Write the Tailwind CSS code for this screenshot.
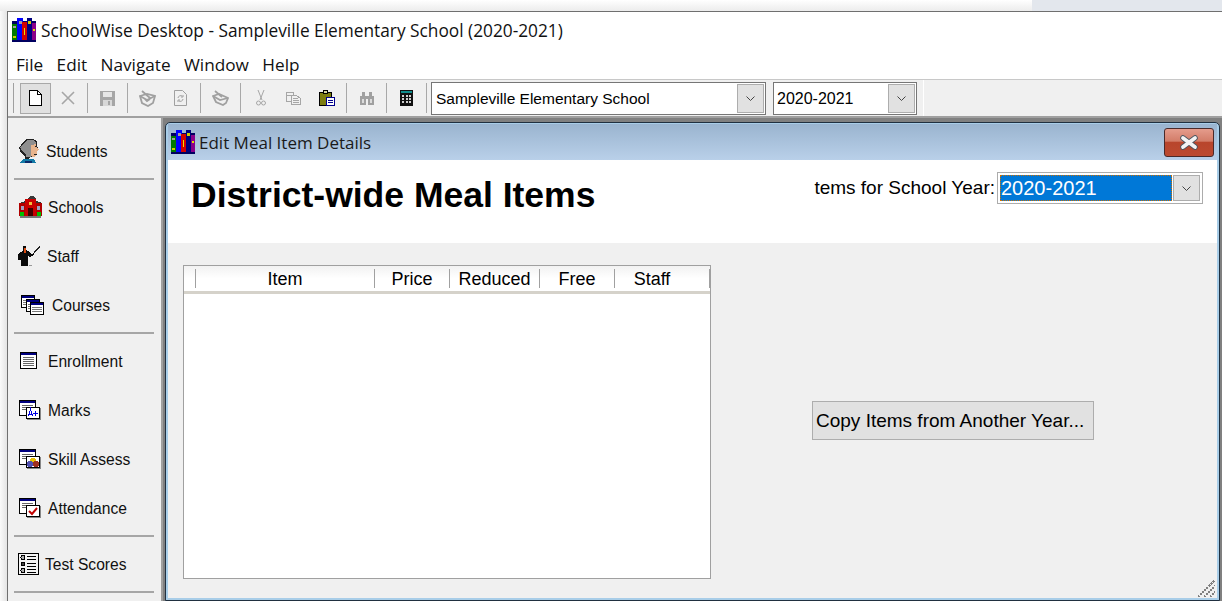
<!DOCTYPE html>
<html lang="en">
<head>
  <meta charset="UTF-8" />
  <title>SchoolWise Desktop</title>
  <script src="https://cdn.jsdelivr.net/npm/@tailwindcss/browser@4"></script>
</head>
<body class="w-[1222px] h-[601px] overflow-hidden flex flex-col bg-white text-black font-['Liberation_Sans',sans-serif]">

  <!-- area above the window -->
  <div class="h-[11px] shrink-0 flex bg-gradient-to-b from-[#ffffff] to-[#ececec]">
    <div class="flex-1"></div>
    <div class="w-[190px] bg-[#e3e7ed]"></div>
  </div>

  <div class="flex-1 flex min-h-0">
    <div class="w-[7px] shrink-0 bg-gradient-to-r from-[#fafafa] to-[#e4e4e4]"></div>

    <!-- main window -->
    <div class="flex-1 flex flex-col min-w-0 border-l border-t border-[#6f6f6f]">
      <div class="h-[36px] shrink-0 flex items-center pl-[4px] gap-[5px] text-[17.3px] text-[#111] font-['Open_Sans',sans-serif]">
        <svg width="24" height="24" viewBox="0 0 24 24" shape-rendering="crispEdges">
          <rect x="0" y="3" width="24" height="21" fill="#000060"/>
          <rect x="0" y="6" width="5" height="16" fill="#007a00"/>
          <rect x="5" y="0" width="6" height="22" fill="#0000ff"/>
          <rect x="10" y="4" width="5" height="18" fill="#d40000"/>
          <rect x="15" y="0" width="5" height="22" fill="#00007f"/>
          <rect x="20" y="5" width="4" height="17" fill="#8a008a"/>
          <rect x="1" y="8" width="3" height="2" fill="#a0a0a0"/>
          <rect x="7" y="3" width="3" height="3" fill="#a0a0a0"/>
          <rect x="12" y="10" width="1" height="7" fill="#f0e000"/>
          <rect x="16" y="3" width="3" height="3" fill="#d0d000"/>
          <rect x="1" y="18" width="3" height="2" fill="#d0d000"/>
          <rect x="21" y="11" width="2" height="2" fill="#e0e000"/>
        </svg>
        <span class="pt-[2px]">SchoolWise Desktop - Sampleville Elementary School (2020-2021)</span>
      </div>
      <div class="h-[31px] shrink-0 flex items-center pl-[8px] pt-[2px] gap-[13.4px] text-[17.2px] text-[#111] font-['Open_Sans',sans-serif]">
        <span>File</span><span>Edit</span><span>Navigate</span><span>Window</span><span>Help</span>
      </div>

      <!-- toolbar -->
      <div class="h-[39px] shrink-0 flex bg-[#f0f0f0] border-t border-[#c8c8c8] border-b-2 border-b-[#a0a0a0]">
        <div class="w-[916px] shrink-0 flex items-center pl-[5px] border-r border-white">
          <div class="w-[2px] h-[30px] mr-[5px] border-l border-[#a0a0a0]"></div>
          <div class="w-[31px] h-[31px] flex items-center justify-center bg-[#e0e0e0] border border-[#a8a8a8]">
            <svg width="13" height="16" viewBox="0 0 13 16" shape-rendering="crispEdges"><path d="M.5.5h8l4 4v11H.5z" fill="#fff" stroke="#000"/><path d="M8.5.5v4h4" fill="none" stroke="#000"/></svg>
          </div>
          <div class="w-[33px] flex justify-center">
            <svg width="14" height="14" viewBox="0 0 14 14"><path d="M1 1l12 12M13 1L1 13" stroke="#a6a6a6" stroke-width="1.6"/></svg>
          </div>
          <div class="w-[7px] h-[30px] flex justify-center"><div class="w-px bg-[#a8a8a8]"></div></div>
          <div class="w-[33px] flex justify-center">
            <svg width="15" height="15" viewBox="0 0 15 15" shape-rendering="crispEdges"><path d="M0 0h14l1 1v14H0z" fill="#a6a6a6"/><rect x="3" y="1" width="9" height="5" fill="#e6e6e6"/><rect x="3" y="9" width="9" height="6" fill="#d8d8d8"/><rect x="8" y="10" width="2" height="4" fill="#a6a6a6"/></svg>
          </div>
          <div class="w-[7px] h-[30px] flex justify-center"><div class="w-px bg-[#a8a8a8]"></div></div>
          <div class="w-[33px] flex justify-center">
            <svg width="17" height="17" viewBox="0 0 17 17" fill="none" stroke="#a0a0a0" stroke-width="1.8"><path d="M1 6l7-2 8 2-2 7-5 3-6-3z"/><path d="M3 1l8 7M1 6l7 4 8-4M6 9l2 2 3-2"/></svg>
          </div>
          <div class="w-[33px] flex justify-center">
            <svg width="13" height="16" viewBox="0 0 13 16" fill="none" stroke="#a0a0a0"><path d="M.5.5h8l4 4v11H.5z"/><path d="M4 8c0-2 3-3 4-2M9 5v2H7M9 9c0 2-3 3-4 2M4 12v-2h2"/></svg>
          </div>
          <div class="w-[7px] h-[30px] flex justify-center"><div class="w-px bg-[#a8a8a8]"></div></div>
          <div class="w-[33px] flex justify-center">
            <svg width="17" height="16" viewBox="0 0 17 16" fill="none" stroke="#a0a0a0" stroke-width="1.8"><path d="M1 6l6-2 9 4-2 5-3 2-7-3z"/><path d="M3 1l7 6M1 6l7 4 8-2"/></svg>
          </div>
          <div class="w-[7px] h-[30px] flex justify-center"><div class="w-px bg-[#a8a8a8]"></div></div>
          <div class="w-[33px] flex justify-center">
            <svg width="10" height="16" viewBox="0 0 10 16" fill="none" stroke="#a6a6a6"><path d="M2 0l4 10M8 0L4 10"/><circle cx="2.5" cy="13" r="2"/><circle cx="7.5" cy="13" r="2"/></svg>
          </div>
          <div class="w-[33px] flex justify-center">
            <svg width="15" height="13" viewBox="0 0 15 13" fill="#f0f0f0" stroke="#a6a6a6" shape-rendering="crispEdges"><path d="M.5.5h7v9h-7z"/><path d="M.5 3.500h7"/><path d="M5.500 3.500h5l4 3v6h-9z"/><path d="M7 6.500h5M7 8.500h6M7 10.500h6"/></svg>
          </div>
          <div class="w-[33px] flex justify-center">
            <svg width="16" height="16" viewBox="0 0 16 16" shape-rendering="crispEdges"><rect x="0" y="2" width="13" height="14" fill="#000"/><rect x="1" y="3" width="11" height="12" fill="#7c7c10"/><rect x="4" y="0" width="5" height="4" fill="#000"/><rect x="5" y="1" width="3" height="2" fill="#d8d8a0"/><rect x="7" y="7" width="9" height="9" fill="#00008c"/><rect x="8" y="8" width="7" height="7" fill="#fff"/><rect x="9" y="10" width="5" height="1" fill="#00008c"/><rect x="9" y="12" width="5" height="1" fill="#00008c"/></svg>
          </div>
          <div class="w-[7px] h-[30px] flex justify-center"><div class="w-px bg-[#a8a8a8]"></div></div>
          <div class="w-[33px] flex justify-center">
            <svg width="16" height="13" viewBox="0 0 16 13" shape-rendering="crispEdges" fill="#a0a0a0"><rect x="3" y="0" width="3" height="4"/><rect x="10" y="0" width="3" height="4"/><rect x="1" y="4" width="6" height="9"/><rect x="9" y="4" width="6" height="9"/><rect x="7" y="4" width="2" height="3"/><rect x="3" y="7" width="2" height="4" fill="#dcdcdc"/><rect x="11" y="7" width="2" height="4" fill="#dcdcdc"/></svg>
          </div>
          <div class="w-[7px] h-[30px] flex justify-center"><div class="w-px bg-[#a8a8a8]"></div></div>
          <div class="w-[33px] flex justify-center">
            <svg width="13" height="16" viewBox="0 0 13 16" shape-rendering="crispEdges"><rect width="13" height="16" fill="#111"/><rect x="1" y="1" width="11" height="2" fill="#0f8c8c"/><path d="M2 5h2v2H2zM5.500 5h2v2h-2zM9 5h2v2H9zM2 8h2v2H2zM5.500 8h2v2h-2zM9 8h2v2H9zM2 11h2v2H2zM5.500 11h2v2h-2zM9 11h2v2H9z" fill="#cfcfcf"/></svg>
          </div>
          <div class="w-[7px] h-[30px] flex justify-center"><div class="w-px bg-[#a8a8a8]"></div></div>

          <div class="w-[335px] h-[33px] ml-px flex items-center bg-white border border-[#767676] pl-[4px] pr-px text-[15.5px]">
            <span class="flex-1 pt-px">Sampleville Elementary School</span>
            <div class="w-[27px] h-[29px] flex items-center justify-center bg-[#e1e1e1] border border-[#adadad]">
              <svg width="9" height="5" viewBox="0 0 9 5" fill="none" stroke="#444"><path d="M.5.5l4 4 4-4"/></svg>
            </div>
          </div>
          <div class="w-[144px] h-[33px] ml-[7px] flex items-center bg-white border border-[#767676] pl-[3px] pr-px text-[16px]">
            <span class="flex-1 pt-px">2020-2021</span>
            <div class="w-[27px] h-[29px] flex items-center justify-center bg-[#e1e1e1] border border-[#adadad]">
              <svg width="9" height="5" viewBox="0 0 9 5" fill="none" stroke="#444"><path d="M.5.5l4 4 4-4"/></svg>
            </div>
          </div>
        </div>
        <div class="flex-1"></div>
      </div>

      <div class="flex-1 flex min-h-0">
        <!-- side navigation -->
        <div class="w-[153px] shrink-0 bg-[#f0f0f0] pt-[8px] pl-[6px] pr-[7px] text-[15.6px] text-[#111]">
          <div class="h-[49px] flex items-center gap-[6px] pl-[5px]">
            <svg width="21" height="24" viewBox="0 0 21 24" shape-rendering="crispEdges">
              <path d="M4 3l3-3h7l4 2v5l2 4-2 1v3l-2 3h-5l-1 2H6v-3l-4-3-2-5z" fill="#222"/>
              <path d="M5 4l3-3 6 0 3 2v2l-5 1v6l1 3-1 3H7v-3l-4-3-2-4z" fill="#8f8f8f"/>
              <path d="M12 6l5-1 1 3 2 3-2 1v3l-2 3h-3l-1-3z" fill="#e8b48c"/>
              <path d="M4 20h11l2 4H1z" fill="#127aa6"/>
              <path d="M6 22h7v2H6z" fill="#0a2a6a"/>
              <path d="M16 7h2v1h-2zM15 15h3v1h-3z" fill="#222"/>
            </svg>
            <span class="pt-[2px]">Students</span>
          </div>
          <div class="h-[7px] flex flex-col justify-center"><div class="h-[2px] bg-[#a6a6a6]"></div></div>
          <div class="h-[49px] flex items-center gap-[6px] pl-[5px]">
            <svg width="23" height="22" viewBox="0 0 23 22" shape-rendering="crispEdges">
              <path d="M8 3l3-3 4 0 2 3v2h-9z" fill="#3a3a3a"/>
              <rect x="0" y="7" width="23" height="13" fill="#b00000"/>
              <rect x="6" y="3" width="11" height="17" fill="#c90000"/>
              <path d="M0 7l6-2v2zM23 7l-6-2v2z" fill="#333"/>
              <rect x="9" y="12" width="5" height="8" fill="#400000"/>
              <rect x="10" y="6" width="3" height="3" fill="#f0c040"/>
              <rect x="2" y="10" width="3" height="4" fill="#a0a0c0"/>
              <rect x="18" y="10" width="3" height="4" fill="#a0a0c0"/>
              <rect x="1" y="20" width="21" height="2" fill="#777"/>
              <rect x="1" y="16" width="4" height="4" fill="#00c000"/>
              <rect x="18" y="16" width="4" height="4" fill="#00c000"/>
            </svg>
            <span class="pt-[2px]">Schools</span>
          </div>
          <div class="h-[49px] flex items-center gap-[7px] pl-[4px]">
            <svg width="22" height="20" viewBox="0 0 22 20" shape-rendering="crispEdges">
              <path d="M5 0h3v3l1 2 3 1 1 2 3-1v2l-4 2-2-1v10H3v-6H0V9l2-3 3-1z" fill="#0a0a0a"/>
              <path d="M6 2h2v5H6z" fill="#d84a10"/>
              <path d="M21 0l1 1-6 6-1-1z" fill="#222"/>
              <rect x="11" y="19" width="3" height="1" fill="#999"/>
            </svg>
            <span class="pt-[2px]">Staff</span>
          </div>
          <div class="h-[49px] flex items-center gap-[8px] pl-[7px]">
            <svg width="23" height="20" viewBox="0 0 23 20" shape-rendering="crispEdges">
              <rect x=".5" y=".5" width="13" height="12" fill="#fff" stroke="#000"/><rect x="1" y="1" width="12" height="2" fill="#000080"/><path d="M2 5h10M2 7h10M2 9h10" stroke="#777"/>
              <rect x="5.500" y="4.500" width="13" height="12" fill="#fff" stroke="#000"/><rect x="6" y="5" width="12" height="2" fill="#000080"/><path d="M7 9h10M7 11h10M7 13h10" stroke="#777"/>
              <rect x="9.500" y="7.500" width="13" height="12" fill="#fff" stroke="#000"/><rect x="10" y="8" width="12" height="2" fill="#000080"/><path d="M11 12h10M11 14h10M11 16h10" stroke="#777"/>
            </svg>
            <span class="pt-[2px]">Courses</span>
          </div>
          <div class="h-[7px] flex flex-col justify-center"><div class="h-[2px] bg-[#a6a6a6]"></div></div>
          <div class="h-[49px] flex items-center gap-[11px] pl-[6px]">
            <svg width="17" height="17" viewBox="0 0 17 17" shape-rendering="crispEdges"><rect x=".5" y=".5" width="16" height="16" fill="#fff" stroke="#000"/><rect x="1" y="1" width="15" height="2" fill="#000080"/><path d="M3 5h11M3 7h11M3 9h11M3 11h11M3 13h11" stroke="#666"/></svg>
            <span class="pt-[2px]">Enrollment</span>
          </div>
          <div class="h-[49px] flex items-center gap-[7px] pl-[5px]">
            <svg width="22" height="20" viewBox="0 0 22 20" shape-rendering="crispEdges"><rect x=".5" y=".5" width="16" height="15" fill="#fff" stroke="#000"/><rect x="1" y="1" width="15" height="2" fill="#000080"/><path d="M3 5h11M3 7h11M3 9h11" stroke="#666"/><rect x="8" y="8" width="14" height="12" fill="#888"/><rect x="7.500" y="7.500" width="13" height="11" fill="#fff" stroke="#000"/><path d="M9.500 16l2-7 2 7M10 14h3M14 13h5M16.500 10.500v5" stroke="#0000e0" fill="none"/></svg>
            <span class="pt-[2px]">Marks</span>
          </div>
          <div class="h-[49px] flex items-center gap-[7px] pl-[5px]">
            <svg width="22" height="20" viewBox="0 0 22 20" shape-rendering="crispEdges"><rect x=".5" y=".5" width="16" height="15" fill="#fff" stroke="#000"/><rect x="1" y="1" width="15" height="2" fill="#000080"/><path d="M3 5h11M3 7h11M3 9h11" stroke="#666"/><rect x="8" y="8" width="14" height="12" fill="#888"/><rect x="7.500" y="7.500" width="13" height="11" fill="#fff" stroke="#000"/><circle cx="14" cy="11.500" r="3" fill="#e8c000"/><circle cx="11" cy="15" r="3" fill="#5050b0"/><circle cx="17" cy="15" r="3" fill="#a03020"/></svg>
            <span class="pt-[2px]">Skill Assess</span>
          </div>
          <div class="h-[49px] flex items-center gap-[7px] pl-[5px]">
            <svg width="22" height="20" viewBox="0 0 22 20" shape-rendering="crispEdges"><rect x=".5" y=".5" width="16" height="15" fill="#fff" stroke="#000"/><rect x="1" y="1" width="15" height="2" fill="#000080"/><path d="M3 5h11M3 7h11M3 9h11" stroke="#666"/><rect x="8" y="8" width="14" height="12" fill="#888"/><rect x="7.500" y="7.500" width="13" height="11" fill="#fff" stroke="#000"/><path d="M10 13l3 3 5-6" fill="none" stroke="#c00000" stroke-width="2" shape-rendering="auto"/></svg>
            <span class="pt-[2px]">Attendance</span>
          </div>
          <div class="h-[7px] flex flex-col justify-center"><div class="h-[2px] bg-[#a6a6a6]"></div></div>
          <div class="h-[49px] flex items-center gap-[6px] pl-[4px]">
            <svg width="21" height="22" viewBox="0 0 21 22" shape-rendering="crispEdges"><rect x=".5" y=".5" width="20" height="21" fill="#f4f4f4" stroke="#000"/><circle cx="5" cy="4.500" r="2" fill="#aaa" stroke="#000"/><circle cx="5" cy="11" r="2" fill="#444" stroke="#000"/><circle cx="5" cy="17.500" r="2" fill="#aaa" stroke="#000"/><path d="M9 3h9M9 6h9M9 10h9M9 13h9M9 16h9M9 19h9" stroke="#000"/></svg>
            <span class="pt-[2px]">Test Scores</span>
          </div>
          <div class="h-[7px] flex flex-col justify-center"><div class="h-[2px] bg-[#a6a6a6]"></div></div>
        </div>

        <!-- workspace behind the child window -->
        <div class="flex-1 min-w-0 flex border-l-2 border-[#a0a0a0] bg-[#808080] pl-[2px] pt-[4px] pr-[2px]">
          <div class="flex-1 min-w-0 flex flex-col rounded-t-[5px] border border-[#203040] p-[2px] pt-[1px] bg-[#a8cde8]">
            <div class="h-[36px] shrink-0 flex items-center pl-[3px] gap-[4px] relative bg-gradient-to-b from-[#9ab4cf] to-[#b9d0e9] text-[#1a1a1a] text-[17px] font-['Open_Sans',sans-serif]">
              <svg width="24" height="24" viewBox="0 0 24 24" shape-rendering="crispEdges">
                <rect x="0" y="3" width="24" height="21" fill="#000060"/>
                <rect x="0" y="6" width="5" height="16" fill="#007a00"/>
                <rect x="5" y="0" width="6" height="22" fill="#0000ff"/>
                <rect x="10" y="4" width="5" height="18" fill="#d40000"/>
                <rect x="15" y="0" width="5" height="22" fill="#00007f"/>
                <rect x="20" y="5" width="4" height="17" fill="#8a008a"/>
                <rect x="1" y="8" width="3" height="2" fill="#a0a0a0"/>
                <rect x="7" y="3" width="3" height="3" fill="#a0a0a0"/>
                <rect x="12" y="10" width="1" height="7" fill="#f0e000"/>
                <rect x="16" y="3" width="3" height="3" fill="#d0d000"/>
                <rect x="1" y="18" width="3" height="2" fill="#d0d000"/>
                <rect x="21" y="11" width="2" height="2" fill="#e0e000"/>
              </svg>
              <span class="pt-[2px]">Edit Meal Item Details</span>
              <div class="absolute right-[3px] top-[4px] w-[50px] h-[29px] flex items-center justify-center rounded-[3px] border border-[#4a2a2a] bg-[linear-gradient(#e59c8c_0%,#d27c68_46%,#b8452c_47%,#bc4a30_100%)]">
                <svg width="20" height="15" viewBox="0 0 20 15"><path d="M4 3l12 9M16 3L4 12" stroke="#4a5560" stroke-width="5.500" stroke-linecap="round"/><path d="M4 3l12 9M16 3L4 12" stroke="#f4f4f4" stroke-width="3.800" stroke-linecap="round"/></svg>
              </div>
            </div>

            <div class="flex-1 min-h-0 flex flex-col bg-[#f0f0f0] relative">
              <div class="h-[83px] shrink-0 bg-white flex justify-between pl-[23px] pr-[14px]">
                <h1 class="text-[35.5px] font-bold leading-none pt-[18px]">District-wide Meal Items</h1>
                <div class="h-[32px] mt-[12px] flex items-center text-[19px] gap-[2px]">
                  <span>tems for School Year:</span>
                  <div class="w-[206px] h-[32px] flex items-center border border-[#acacac] bg-white p-[2px]">
                    <div class="flex-1 h-full flex items-center pl-[1px] bg-[#0078d7] text-white text-[20px] outline-1 outline-dotted outline-[#d07000] -outline-offset-1">2020-2021</div>
                    <div class="w-[27px] h-full ml-px flex items-center justify-center bg-[#e1e1e1] border border-[#adadad]">
                      <svg width="9" height="5" viewBox="0 0 9 5" fill="none" stroke="#444"><path d="M.5.5l4 4 4-4"/></svg>
                    </div>
                  </div>
                </div>
              </div>

              <div class="flex-1 min-h-0 flex pl-[15px] pt-[22px] pb-[19px]">
                <div class="w-[528px] shrink-0 bg-white border border-[#a0a0a0]">
                  <div class="h-[28px] flex items-center text-[18px] bg-gradient-to-b from-[#f2f2f2] via-white to-white border-b-[3px] border-[#d5d2ca] pl-[11px]">
                    <div class="w-[179px] h-[19px] flex items-center justify-center pt-[2px] border-l border-[#a0a0a0]">Item</div>
                    <div class="w-[75px] h-[19px] flex items-center justify-center pt-[2px] border-l border-[#a0a0a0]">Price</div>
                    <div class="w-[90px] h-[19px] flex items-center justify-center pt-[2px] border-l border-[#a0a0a0]">Reduced</div>
                    <div class="w-[75px] h-[19px] flex items-center justify-center pt-[2px] border-l border-[#a0a0a0]">Free</div>
                    <div class="w-[75px] h-[19px] flex items-center justify-center pt-[2px] border-l border-[#a0a0a0]">Staff</div>
                    <div class="flex-1 h-[19px] border-r border-[#a0a0a0]"></div>
                  </div>
                </div>
                <div class="flex-1 flex items-start pl-[101px] pt-[136px]">
                  <button class="w-[282px] h-[39px] pt-[2px] bg-[#e1e1e1] border border-[#adadad] text-[19px] text-left pl-[3px]">Copy Items from Another Year...</button>
                </div>
              </div>

              <svg class="absolute right-[2px] bottom-[1px]" width="17" height="17" viewBox="0 0 17 17" shape-rendering="crispEdges" stroke="#808080" stroke-width="2" stroke-dasharray="2 1" fill="none"><path d="M0 17L17 0M6 17L17 6M12 17l5-5"/></svg>
            </div>
          </div>
        </div>
      </div>
    </div>
  </div>
</body>
</html>
